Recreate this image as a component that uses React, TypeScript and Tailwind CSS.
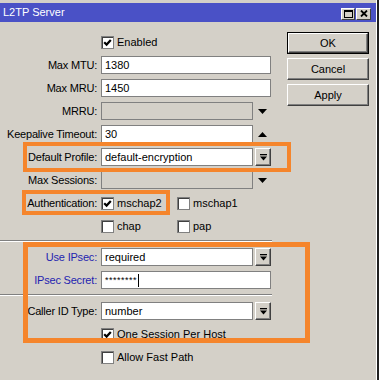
import React from 'react';

function Check({ checked }: { checked?: boolean }) {
  return (
    <div className="w-[13px] h-[13px] shrink-0 bg-white border border-[#808080] shadow-[inset_1px_1px_0_#404040] flex items-center justify-center">
      {checked && (
        <svg width="9" height="9" viewBox="0 0 9 9">
          <path d="M1.2 4.2 L3.6 6.6 L7.8 2" stroke="#000" strokeWidth="2.2" fill="none" />
        </svg>
      )}
    </div>
  );
}

function Field({ value, wide, disabled }: { value?: React.ReactNode; wide?: boolean; disabled?: boolean }) {
  return (
    <div
      className={`h-[18px] shrink-0 border border-[#808080] px-[3px] flex items-center ${
        wide ? 'w-[170px]' : 'w-[152px]'
      } ${disabled ? 'bg-[#d4d0c8]' : 'bg-white'}`}
    >
      {value}
    </div>
  );
}

function DropButton() {
  return (
    <div className="ml-[2px] w-[16px] h-[18px] bg-[#d4d0c8] border border-t-white border-l-white border-b-[#404040] border-r-[#404040] shadow-[inset_-1px_-1px_0_#808080] flex items-center justify-center">
      <svg width="7" height="7" viewBox="0 0 7 7">
        <rect x="0" y="0" width="7" height="1.3" fill="#000" />
        <path d="M0 2.5 L7 2.5 L3.5 6.5 Z" fill="#000" />
      </svg>
    </div>
  );
}

function Arrow({ up }: { up?: boolean }) {
  return (
    <div className="w-[19px] flex items-center justify-center">
      <svg width="9" height="5" viewBox="0 0 9 5">
        <path d={up ? 'M0 5 L9 5 L4.5 0 Z' : 'M0 0 L9 0 L4.5 5 Z'} fill="#000" />
      </svg>
    </div>
  );
}

function Row({ label, blue, children }: { label?: string; blue?: boolean; children?: React.ReactNode }) {
  return (
    <div className="h-[18px] flex items-center">
      <div
        className={`w-[101px] pr-[4px] text-right whitespace-nowrap tracking-[-0.2px] ${
          blue ? 'text-[#1f24b0]' : 'text-black'
        }`}
      >
        {label}
      </div>
      {children}
    </div>
  );
}

function Opt({ label, checked }: { label: string; checked?: boolean }) {
  return (
    <div className="w-[76px] flex items-center gap-[3px]">
      <Check checked={checked} />
      <span>{label}</span>
    </div>
  );
}

function Sep() {
  return <div className="w-[272px] h-[2px] border-t border-[#808080] border-b border-b-white mb-[1px]" />;
}

function WinButton({ label, isDefault }: { label: string; isDefault?: boolean }) {
  return (
    <div className={`h-[22px] ${isDefault ? 'border border-black' : ''}`}>
      <div className="h-full bg-[#d4d0c8] border border-t-white border-l-white border-b-[#404040] border-r-[#404040] shadow-[inset_-1px_-1px_0_#808080] flex items-center justify-center">
        {label}
      </div>
    </div>
  );
}

export default function App() {
  return (
    <div className="w-[379px] h-[380px] overflow-hidden bg-[#d4d0c8] border-r-2 border-[#202020] font-['Liberation_Sans',Arial,sans-serif] text-[11px] text-black">
      <div className="h-full border-r border-white flex flex-col">
        <div className="h-[3px]" />
        {/* title bar */}
        <div className="h-[19px] bg-[#4a51c6] flex items-center pl-[3px] pr-[5px]">
          <span className="text-white flex-1">L2TP Server</span>
          <div className="flex gap-[1px] mt-[2px]">
            <div className="w-[14px] h-[12px] bg-[#d4d0c8] border border-t-white border-l-white border-b-[#404040] border-r-[#404040] flex items-center justify-center">
              <div className="w-[9px] h-[8px] border border-black border-t-2" />
            </div>
            <div className="w-[15px] h-[12px] bg-[#d4d0c8] border border-t-white border-l-white border-b-[#404040] border-r-[#404040] flex items-center justify-center">
              <svg width="8" height="7" viewBox="0 0 8 7">
                <path d="M1 0.5 L7 6.5 M7 0.5 L1 6.5" stroke="#000" strokeWidth="1.8" />
              </svg>
            </div>
          </div>
        </div>

        {/* body */}
        <div className="relative flex-1 flex">
          <div className="w-[287px] pt-[11px] flex flex-col gap-[5px]">
            <div className="h-[18px] pl-[101px] flex items-center gap-[3px]">
              <Check checked />
              <span>Enabled</span>
            </div>
            <Row label="Max MTU:">
              <Field wide value="1380" />
            </Row>
            <Row label="Max MRU:">
              <Field wide value="1450" />
            </Row>
            <Row label="MRRU:">
              <Field disabled />
              <Arrow />
            </Row>
            <Row label="Keepalive Timeout:">
              <Field value="30" />
              <Arrow up />
            </Row>
            <Row label="Default Profile:">
              <Field value="default-encryption" />
              <DropButton />
            </Row>
            <Row label="Max Sessions:">
              <Field disabled />
              <Arrow />
            </Row>
            <Row label="Authentication:">
              <Opt label="mschap2" checked />
              <Opt label="mschap1" />
            </Row>
            <Row>
              <Opt label="chap" />
              <Opt label="pap" />
            </Row>
            <Sep />
            <Row label="Use IPsec:" blue>
              <Field value="required" />
              <DropButton />
            </Row>
            <Row label="IPsec Secret:" blue>
              <Field
                wide
                value={
                  <span className="flex items-center">
                    <span className="text-[9px] tracking-[0.5px] leading-none">********</span>
                    <span className="ml-[1px] w-[1px] h-[13px] bg-black" />
                  </span>
                }
              />
            </Row>
            <Sep />
            <Row label="Caller ID Type:">
              <Field value="number" />
              <DropButton />
            </Row>
            <div className="h-[18px] pl-[101px] flex items-center gap-[3px]">
              <Check checked />
              <span>One Session Per Host</span>
            </div>
            <div className="h-[18px] pl-[101px] flex items-center gap-[3px]">
              <Check />
              <span>Allow Fast Path</span>
            </div>
          </div>

          <div className="w-[82px] pt-[10px] flex flex-col gap-[4px]">
            <WinButton label="OK" isDefault />
            <WinButton label="Cancel" />
            <WinButton label="Apply" />
          </div>

          {/* orange annotation boxes */}
          <div className="absolute left-[23px] top-[120px] w-[268px] h-[30px] border-4 border-[#f5852c]" />
          <div className="absolute left-[22px] top-[168px] w-[148px] h-[25px] border-4 border-[#f5852c]" />
          <div className="absolute left-[23px] top-[220px] w-[287px] h-[101px] border-[5px] border-[#f5852c]" />
        </div>
      </div>
    </div>
  );
}
